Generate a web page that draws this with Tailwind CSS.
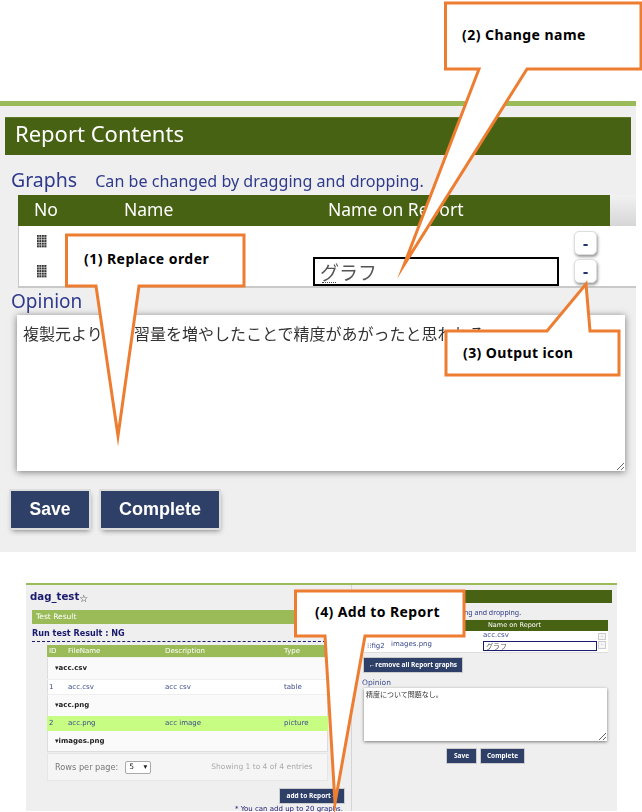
<!DOCTYPE html>
<html lang="en">
<head>
  <meta charset="UTF-8">
  <title>Report Contents</title>
  <script src="https://cdn.jsdelivr.net/npm/@tailwindcss/browser@4"></script>
</head>
<body class="bg-white font-['Noto_Sans','Noto_Sans_CJK_JP',sans-serif]">
<div class="relative w-[642px] h-[812px] overflow-hidden bg-white">

  <!-- upper screenshot -->
  <section class="mt-[101px] w-[636px] h-[451px] bg-[#efefef] border-t-[5px] border-[#9bbb59] pt-[11px] blur-[0.3px]">
    <div class="ml-[5px] w-[626px] h-[38px] bg-[#486213] border-t border-[#5f7a25] pl-[10px] text-white text-[22px] leading-[30px]">Report Contents</div>

    <div class="flex items-baseline ml-[11px] mt-[10px] h-[30px] text-[#2f3a8c]">
      <span class="text-[19.5px] leading-[30px]">Graphs</span>
      <span class="ml-[18px] text-[16.100px] leading-[30px]">Can be changed by dragging and dropping.</span>
    </div>

    <div class="ml-[18px] w-[618px]">
      <div class="flex h-[31px]">
        <div class="w-[592px] bg-[#486213] text-white text-[17.5px] leading-[28px] flex">
          <span class="ml-[16px] w-[90px]">No</span>
          <span class="w-[204px]">Name</span>
          <span>Name on Report</span>
        </div>
        <div class="flex-1 bg-gradient-to-b from-[#f2f2f2] to-[#d6d6d6]"></div>
      </div>
      <div class="h-[62px] bg-white border-l border-b-2 border-[#c9c9c9]">
        <div class="flex items-center h-[30px]">
          <svg class="ml-[18px]" width="10" height="13" viewBox="0 0 10 13"><defs><pattern id="dots" width="2.5" height="2.6" patternUnits="userSpaceOnUse"><rect width="2" height="2" fill="#333"/></pattern></defs><rect width="10" height="13" fill="url(#dots)"/></svg>
          <button class="ml-[527px] w-[23px] h-[24px] mt-[4px] rounded-[5px] bg-white border border-[#ddd] shadow-[1px_2px_3px_#999] text-[#1f3470] font-bold text-[16px] leading-[20px]">-</button>
        </div>
        <div class="flex items-center h-[30px]">
          <svg class="ml-[18px]" width="10" height="13" viewBox="0 0 10 13"><rect width="10" height="13" fill="url(#dots)"/></svg>
          <input value="グラフ" class="ml-[266px] w-[246px] h-[29px] mt-[1px] border-2 border-black bg-white px-[5px] text-[19px] text-[#555] outline-none font-['Noto_Sans_CJK_JP',sans-serif]">
          <button class="ml-[15px] w-[23px] h-[24px] mt-[-1px] rounded-[5px] bg-white border border-[#ddd] shadow-[1px_2px_3px_#999] text-[#1f3470] font-bold text-[16px] leading-[20px]">-</button>
        </div>
      </div>
    </div>

    <div class="ml-[11px] h-[27px] text-[19px] leading-[27px] text-[#2f3a8c]">Opinion</div>
    <textarea class="block ml-[17px] w-[608px] h-[156px] bg-white shadow-[0_1px_7px_#777] px-[6px] py-[6px] text-[16px] leading-[24px] text-[#333] outline-none font-['Noto_Sans_CJK_JP',sans-serif]">複製元より、学習量を増やしたことで精度があがったと思われる</textarea>

    <div class="flex gap-[12px] ml-[11px] mt-[20px]">
      <button class="w-[78px] h-[37px] bg-[#2e4068] text-white font-bold text-[17.5px] font-['Liberation_Sans',sans-serif] shadow-[0_0_0_2px_#ddd,1px_3px_5px_#888]">Save</button>
      <button class="w-[118px] h-[37px] bg-[#2e4068] text-white font-bold text-[18px] font-['Liberation_Sans',sans-serif] shadow-[0_0_0_2px_#ddd,1px_3px_5px_#888]">Complete</button>
    </div>
  </section>

  <!-- lower screenshot -->
  <section class="ml-[26px] mt-[31px] w-[591px] h-[228px] bg-[#efefef] border-t-2 border-[#9bbb59] flex blur-[0.5px] font-['DejaVu_Sans',sans-serif]">
    <div class="w-[326px] shrink-0 border-r border-[#d5d5d5] pl-[6px]">
      <div class="flex items-center h-[22px] mt-[1px] ml-[-2px] text-[#1a1a6e] font-bold text-[10.2px]">dag_test<span class="text-[10px] text-[#222] mt-[2px]">☆</span></div>
      <div class="h-[14px] w-[314px] mt-[2px] bg-[#9bbb59] text-white text-[7.5px] leading-[14px] pl-[4px]">Test Result</div>
      <div class="w-[314px] h-[15px] mt-[3px] border-b border-dashed border-[#1a1a6e] text-[#1a1a6e] font-bold text-[8.1px] leading-[13px]">Run test Result : NG</div>

      <div class="ml-[15px] mt-[3px] w-[281px] text-[7px]">
        <div class="flex h-[12px] bg-[#9bbb59] text-white leading-[12px]">
          <span class="ml-[2px] w-[19px]">ID</span><span class="w-[97px]">FileName</span><span class="w-[119px]">Description</span><span>Type</span>
        </div>
        <div class="h-[21px] mt-[1px] bg-[#fafafa] border-x border-[#ddd] pl-[7px] font-bold text-[#222] leading-[20px]">▾acc.csv</div>
        <div class="flex h-[14px] mt-[1px] bg-white border-x border-[#ddd] text-[#3b4a8c] leading-[14px]">
          <span class="ml-[1px] w-[19px]">1</span><span class="w-[97px]">acc.csv</span><span class="w-[119px]">acc csv</span><span>table</span>
        </div>
        <div class="h-[21px] mt-[1px] bg-[#fafafa] border-x border-[#ddd] pl-[7px] font-bold text-[#222] leading-[20px]">▾acc.png</div>
        <div class="flex h-[15px] bg-[#c8fd84] text-[#3b4a8c] leading-[15px]">
          <span class="ml-[2px] w-[19px]">2</span><span class="w-[97px]">acc.png</span><span class="w-[119px]">acc image</span><span>picture</span>
        </div>
        <div class="h-[21px] bg-[#fafafa] border-x border-b border-[#ddd] pl-[7px] font-bold text-[#222] leading-[20px]">▾images.png</div>
        <div class="flex items-center h-[28px] mt-[1px] bg-[#f5f5f5] border border-[#e6e6e6] pl-[7px] text-[#777] text-[8.2px]">
          <span>Rows per page:</span>
          <span class="flex items-center justify-between ml-[7px] w-[26px] h-[13px] bg-white border border-[#aaa] rounded-[2px] px-[3px] text-[#222] text-[7.5px]"><span>5</span><span>▾</span></span>
          <span class="ml-[60px] text-[#aaa] text-[7.5px]">Showing 1 to 4 of 4 entries</span>
        </div>
      </div>

      <div class="flex justify-end mt-[8px] pr-[7px]">
        <button class="w-[64px] h-[14px] bg-[#2e4068] text-white font-bold text-[6.5px] leading-[14px] shadow-[0_0_0_1px_#ccc] font-['Noto_Sans',sans-serif] whitespace-nowrap">add to Report→</button>
      </div>
      <div class="text-right pr-[8px] mt-[2px] text-[7px] leading-[8px] text-[#1a1a6e] whitespace-nowrap">* You can add up to 20 graphs.</div>
    </div>

    <div class="flex-1 pl-[10px] pt-[5px]">
      <div class="ml-[1px] w-[249px] h-[13px] bg-[#486213]"></div>
      <div class="ml-[102px] h-[15px] mt-[2px] text-[7px] leading-[15px] text-[#2f3a8c] whitespace-nowrap font-['Noto_Sans',sans-serif]">ng and dropping.</div>
      <div class="ml-[2px] w-[244px] h-[33px]">
        <div class="h-[11px] bg-[#486213] text-white text-[6.5px] leading-[11px] pl-[124px]">Name on Report</div>
        <div class="h-[22px] bg-white border-b border-[#ddd] text-[7px] text-[#3b4a8c]">
          <div class="flex h-[10px]">
            <span class="ml-[119px] w-[115px] leading-[8px]">acc.csv</span>
            <span class="w-[8px] h-[7px] mt-[2px] bg-[#f5f5f5] border border-[#ccc] text-[5px] leading-[4px] text-center">-</span>
          </div>
          <div class="flex h-[11px]">
            <span class="ml-[3px] w-[24px] leading-[10px]">⁝⁝fig2</span>
            <span class="w-[92px] leading-[6px]">images.png</span>
            <input value="グラフ" class="w-[114px] h-[10px] border border-[#1a1a6e] bg-white px-[2px] text-[7px] text-[#555] outline-none font-['Noto_Sans_CJK_JP',sans-serif]">
            <span class="ml-[1px] w-[8px] h-[8px] bg-[#f5f5f5] border border-[#ccc] text-[5px] leading-[5px] text-center">-</span>
          </div>
        </div>
      </div>
      <button class="block ml-[2px] mt-[5px] w-[98px] h-[14px] bg-[#2e4068] text-white font-bold text-[6.5px] leading-[14px] shadow-[0_0_0_1px_#ccc] whitespace-nowrap font-['Noto_Sans',sans-serif]">←remove all Report graphs</button>
      <div class="mt-[6px] text-[7.5px] leading-[10px] text-[#3b4a8c]">Opinion</div>
      <textarea class="block ml-[2px] w-[243px] h-[53px] bg-white shadow-[0_1px_3px_#777] px-[2px] py-[1px] text-[7px] leading-[10px] text-[#333] outline-none font-['Noto_Sans_CJK_JP',sans-serif]">精度について問題なし。</textarea>
      <div class="flex gap-[5px] ml-[85px] mt-[8px]">
        <button class="w-[29px] h-[14px] bg-[#2e4068] text-white font-bold text-[6.5px] shadow-[0_0_0_1px_#ccc] font-['Noto_Sans',sans-serif]">Save</button>
        <button class="w-[43px] h-[14px] bg-[#2e4068] text-white font-bold text-[6.5px] shadow-[0_0_0_1px_#ccc] font-['Noto_Sans',sans-serif]">Complete</button>
      </div>
    </div>
  </section>

  <!-- IME underline under the typed name -->
  <div class="absolute left-[322px] top-[282px] w-[14px] border-b border-dotted border-[#444]"></div>

  <!-- callouts -->
  <svg class="absolute left-0 top-0" width="642" height="812" viewBox="0 0 642 812" fill="#fff" stroke="#ed7d31" stroke-width="3" stroke-linejoin="miter" stroke-miterlimit="20">
    <path d="M445.500 3 H641 V69 H527 L404 265 L479 69 H445.500 Z"/>
    <path d="M66.500 235 H244 V286 H139 L118 436 L96 286 H66.500 Z"/>
    <path d="M446 331 H547 L586 284 L590 331 H619 V375 H446 Z"/>
    <path d="M295.500 591 H464 V636 H365 L335 803 L325 636 H295.500 Z"/>
  </svg>
  <span class="absolute left-[462px] top-[25px] text-[14px] tracking-[0.45px] leading-[20px] font-bold text-black">(2) Change name</span>
  <span class="absolute left-[84px] top-[249px] text-[14px] tracking-[0.45px] leading-[20px] font-bold text-black">(1) Replace order</span>
  <span class="absolute left-[463px] top-[343px] text-[14px] tracking-[0.4px] leading-[20px] font-bold text-black">(3) Output icon</span>
  <span class="absolute left-[315px] top-[602px] text-[14px] tracking-[0.4px] leading-[20px] font-bold text-black">(4) Add to Report</span>
</div>
</body>
</html>
